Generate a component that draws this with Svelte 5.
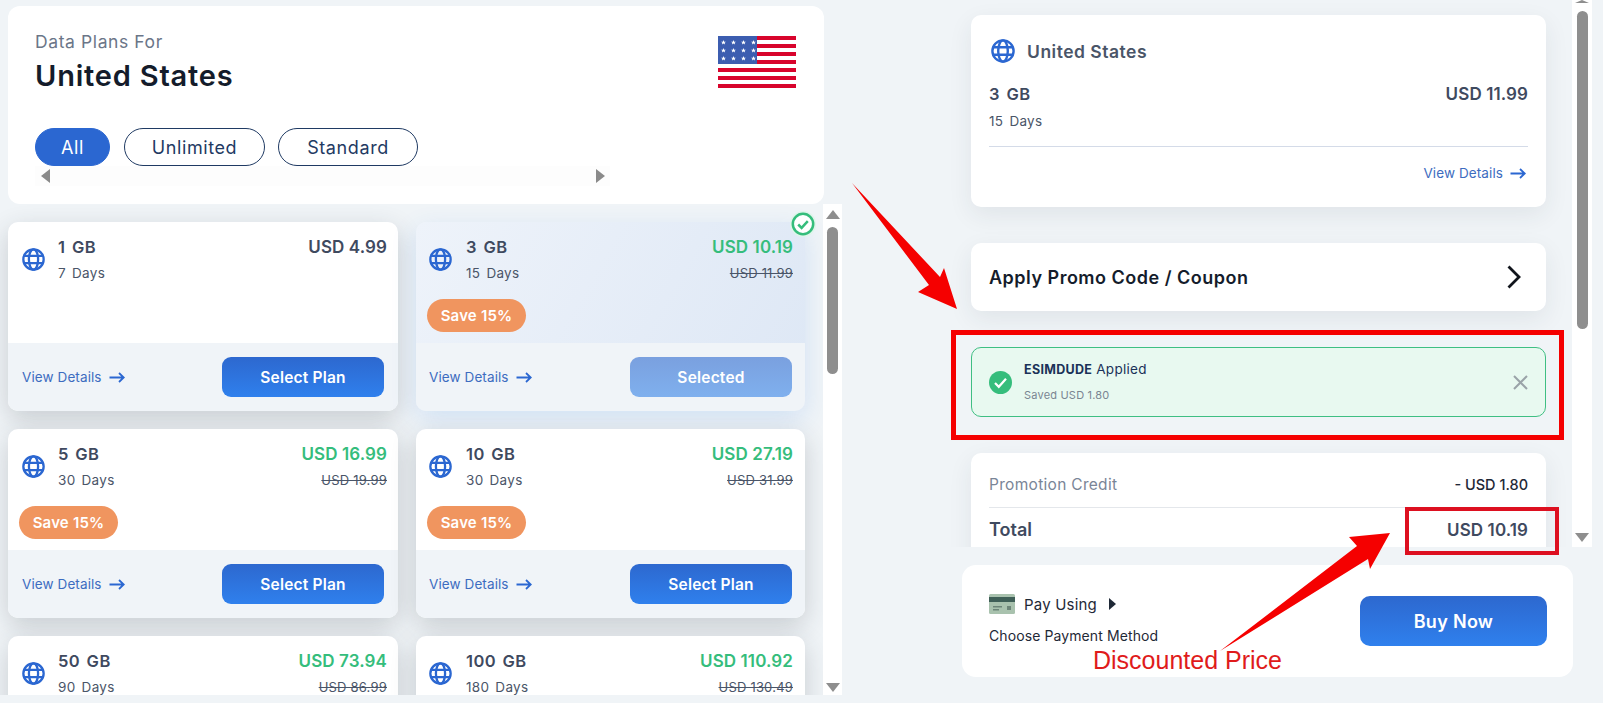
<script>
	const plans = [
		{ gb: '1 GB', days: '7 Days', price: 'USD 4.99' },
		{ gb: '3 GB', days: '15 Days', price: 'USD 10.19', old: 'USD 11.99', save: true, selected: true },
		{ gb: '5 GB', days: '30 Days', price: 'USD 16.99', old: 'USD 19.99', save: true },
		{ gb: '10 GB', days: '30 Days', price: 'USD 27.19', old: 'USD 31.99', save: true },
		{ gb: '50 GB', days: '90 Days', price: 'USD 73.94', old: 'USD 86.99', save: true },
		{ gb: '100 GB', days: '180 Days', price: 'USD 110.92', old: 'USD 130.49', save: true }
	];

	const stars = [];
	for (let r = 0; r < 3; r++) {
		for (let c = 0; c < 4; c++) stars.push({ x: 5 + c * 10, y: 6.5 + r * 8 });
	}
</script>

{#snippet globe(size)}
	<svg class="globe" width={size} height={size} viewBox="0 0 24 24" fill="none" stroke="#2b67d1" stroke-width="2.4">
		<circle cx="12" cy="12" r="10.6" />
		<ellipse cx="12" cy="12" rx="4.8" ry="10.6" />
		<path d="M1.8 8.2h20.4M1.8 15.8h20.4" />
	</svg>
{/snippet}

{#snippet details()}
	<span class="details">
		View Details
		<svg width="16" height="12" viewBox="0 0 16 12" fill="none" stroke="#2b67d1" stroke-width="1.8">
			<path d="M0.5 6.5h14M10 2l4.8 4.5L10 11" />
		</svg>
	</span>
{/snippet}

{#snippet scrollbar()}
	<div class="track">
		<i class="arrow up"></i>
		<div class="thumb"></div>
		<i class="spacer"></i>
		<i class="arrow down"></i>
	</div>
{/snippet}

<div class="page">
	<section class="left">
		<header class="hero">
			<div class="hero-top">
				<div>
					<p class="eyebrow">Data Plans For</p>
					<h1>United States</h1>
				</div>
				<svg class="flag" width="78" height="52" viewBox="0 0 78 52">
					<rect width="78" height="52" fill="#fff" />
					{#each Array(7) as _, i}
						<rect y={i * 8} width="78" height="4" fill="#d8042c" />
					{/each}
					<rect width="39" height="28" fill="#3c5db0" />
					{#each stars as s}
						<polygon
							transform="translate({s.x + 0.5} {s.y})"
							fill="#fff"
							points="0,-2.6 .7,-.8 2.5,-.8 1.1,.3 1.6,2.1 0,1 -1.6,2.1 -1.1,.3 -2.5,-.8 -.7,-.8"
						/>
					{/each}
				</svg>
			</div>
			<div class="pills">
				<button class="pill on">All</button>
				<button class="pill wide">Unlimited</button>
				<button class="pill wide">Standard</button>
			</div>
			<div class="hscroll">
				<i class="tri left-tri"></i>
				<i class="tri right-tri"></i>
			</div>
		</header>

		<div class="list-wrap">
			<div class="list">
				{#each plans as p}
					<article class="plan" class:selected={p.selected}>
						{#if p.selected}
							<svg class="tick" width="26" height="26" viewBox="0 0 26 26" fill="none">
								<circle cx="13" cy="13" r="13" fill="#dff5ea" />
								<circle cx="13" cy="13" r="10.2" fill="#fff" stroke="#35bd7c" stroke-width="2.5" />
								<path d="M8.2 13.5l3.4 3.4 6.2-6.8" stroke="#35bd7c" stroke-width="2.5" />
							</svg>
						{/if}
						<div class="plan-top">
							<div class="summary">
								{@render globe(23)}
								<div class="names">
									<div class="gb">{p.gb}</div>
									<div class="days">{p.days}</div>
								</div>
								<div class="prices">
									<div class="price" class:green={p.old}>{p.price}</div>
									{#if p.old}<s class="old">{p.old}</s>{/if}
								</div>
							</div>
							{#if p.save}<span class="save">Save 15%</span>{/if}
						</div>
						<div class="plan-foot">
							{@render details()}
							<button class="btn" class:muted={p.selected}>{p.selected ? 'Selected' : 'Select Plan'}</button>
						</div>
					</article>
				{/each}
			</div>
			{@render scrollbar()}
		</div>
	</section>

	<section class="right">
		<div class="right-scroll">
			<div class="column">
				<div class="card summary-card">
					<div class="country">
						{@render globe(24)}
						<span>United States</span>
					</div>
					<div class="line">
						<span class="gb">3 GB</span>
						<span class="price">USD 11.99</span>
					</div>
					<div class="days days-line">15 Days</div>
					<hr />
					<div class="end">{@render details()}</div>
				</div>

				<div class="card promo">
					<span>Apply Promo Code / Coupon</span>
					<svg width="16" height="24" viewBox="0 0 16 24" fill="none" stroke="#11151c" stroke-width="2.8">
						<path d="M2.5 1.5L13 12 2.5 22.5" />
					</svg>
				</div>

				<div class="applied">
					<svg width="23" height="23" viewBox="0 0 23 23" fill="none">
						<circle cx="11.5" cy="11.5" r="11.5" fill="#35bd7c" />
						<path d="M6 12l3.8 3.8 7.2-8" stroke="#fff" stroke-width="2.2" />
					</svg>
					<div class="applied-text">
						<div class="code"><b>ESIMDUDE</b> Applied</div>
						<div class="saved">Saved USD 1.80</div>
					</div>
					<svg class="close" width="15" height="15" viewBox="0 0 15 15" stroke="#9aa3a8" stroke-width="2">
						<path d="M1 1l13 13M14 1L1 14" />
					</svg>
				</div>

				<div class="card totals">
					<div class="row credit">
						<span>Promotion Credit</span>
						<span class="amount">- USD 1.80</span>
					</div>
					<div class="row total">
						<span>Total</span>
						<span class="price">USD 10.19</span>
					</div>
				</div>
			</div>
			{@render scrollbar()}
		</div>

		<div class="pay">
			<div>
				<div class="pay-using">
					<svg width="26" height="20" viewBox="0 0 26 20">
						<rect width="26" height="20" rx="1.5" fill="#a9c2ae" />
						<rect y="3" width="26" height="5" fill="#3f5f57" />
						<rect x="4" y="12" width="9" height="1.5" fill="#6d8578" />
						<rect x="4" y="15" width="6" height="1.5" fill="#6d8578" />
						<rect x="18" y="12" width="4" height="4" fill="#6d8578" />
					</svg>
					<span>Pay Using</span>
					<i class="mini-tri"></i>
				</div>
				<div class="choose">Choose Payment Method</div>
			</div>
			<button class="btn buy">Buy Now</button>
		</div>
	</section>

	<!-- annotations drawn on top of the screenshot -->
	<svg class="marks" width="1603" height="703" viewBox="0 0 1603 703">
		<polygon fill="#f50000" points="852,183 940,277 944,268 957,309 918,292 929,285" />
		<polygon fill="#f50000" points="1220,651 1357,546 1349,537 1390,533 1370,569 1368,559" />
	</svg>
	<div class="box box-applied"></div>
	<div class="box box-total"></div>
	<div class="note">Discounted Price</div>
</div>

<style>
	:global(body) {
		margin: 0;
		background: #f0f4f7;
	}

	.page {
		position: relative;
		display: flex;
		width: 1603px;
		height: 703px;
		overflow: hidden;
		background: #f0f4f7;
		font-family: Inter, 'Open Sans', sans-serif;
		color: #3f4a5f;
	}

	button {
		font-family: inherit;
		cursor: pointer;
	}

	.left {
		display: flex;
		flex-direction: column;
		width: 842px;
		height: 695px;
	}

	.hero {
		box-sizing: border-box;
		height: 198px;
		margin: 6px 18px 0 8px;
		padding: 24px 28px 0 27px;
		background: #fff;
		border-radius: 12px;
	}

	.hero-top {
		display: flex;
		justify-content: space-between;
		height: 98px;
	}

	.flag {
		margin-top: 6px;
	}

	.eyebrow {
		margin: 0;
		font-size: 17.5px;
		line-height: 24px;
		letter-spacing: 0.6px;
		color: #6b7688;
	}

	h1 {
		margin: 4px 0 0;
		font-size: 29px;
		line-height: 36px;
		font-weight: 600;
		letter-spacing: 0.8px;
		color: #141c2b;
	}

	.pills {
		display: flex;
		gap: 13px;
	}

	.pill {
		box-sizing: border-box;
		width: 75px;
		height: 38px;
		padding: 0;
		background: #fff;
		border: 1px solid #1f3a63;
		border-radius: 19px;
		font-size: 18px;
		letter-spacing: 0.6px;
		color: #1f3a63;
	}

	.pill.on {
		margin-right: 1px;
		background: #2b67d1;
		border-color: #2b67d1;
		color: #fff;
	}

	.pill.wide {
		width: 141px;
	}

	.pill.wide:last-child {
		width: 140px;
	}

	.hscroll {
		display: flex;
		justify-content: space-between;
		align-items: center;
		width: 575px;
		height: 20px;
		padding: 0 5px 0 6px;
		box-sizing: border-box;
		background: #fdfdfd;
	}

	.tri {
		width: 0;
		height: 0;
		border-top: 7px solid transparent;
		border-bottom: 7px solid transparent;
	}

	.left-tri {
		border-right: 9px solid #8a8a8a;
	}

	.right-tri {
		border-left: 9px solid #8a8a8a;
	}

	.list-wrap {
		flex: 1;
		display: flex;
		min-height: 0;
	}

	.list {
		flex: 1;
		display: grid;
		grid-template-columns: 390px 389px;
		grid-auto-rows: 189px;
		gap: 18px;
		padding: 18px 0 0 8px;
		overflow: hidden;
	}

	.track {
		display: flex;
		flex-direction: column;
		align-items: center;
		box-sizing: border-box;
		width: 19px;
		padding: 6px 0 3px;
		background: #fff;
	}

	.arrow {
		flex: none;
		width: 0;
		height: 0;
		border-left: 7px solid transparent;
		border-right: 7px solid transparent;
	}

	.arrow.up {
		border-bottom: 9px solid #8e8e8e;
	}

	.arrow.down {
		border-top: 9px solid #8e8e8e;
	}

	.thumb {
		flex: none;
		width: 11px;
		height: 147px;
		margin-top: 8px;
		background: #8e8e8e;
		border-radius: 6px;
	}

	.spacer {
		flex: 1;
	}

	.plan {
		position: relative;
		display: flex;
		flex-direction: column;
		background: #fff;
		border-radius: 10px;
		box-shadow: 0 8px 26px rgba(40, 50, 60, 0.2);
	}

	.plan.selected {
		background: linear-gradient(120deg, #eef3fa, #dde7f5);
		box-shadow: 0 8px 26px rgba(47, 128, 237, 0.16);
	}

	.tick {
		position: absolute;
		top: -11px;
		right: -11px;
	}

	.plan-top {
		height: 121px;
		padding-top: 13px;
		box-sizing: border-box;
	}

	.summary {
		display: flex;
		align-items: flex-start;
		padding: 0 11px 0 14px;
	}

	.plan:nth-child(even) .summary {
		padding: 0 12px 0 13px;
	}

	.globe {
		flex: none;
	}

	.summary .globe {
		margin-top: 13px;
	}

	.names {
		flex: 1;
		margin-left: 13px;
	}

	.plan:nth-child(even) .names {
		margin-left: 14px;
	}

	.gb {
		font-size: 16.5px;
		line-height: 24px;
		font-weight: 600;
		letter-spacing: 0.4px;
		word-spacing: 2px;
		color: #3f4a5f;
	}

	.days {
		margin-top: 4px;
		font-size: 13.5px;
		line-height: 20px;
		letter-spacing: 0.3px;
		word-spacing: 2px;
		color: #4a5568;
	}

	.prices {
		text-align: right;
	}

	.price {
		font-size: 17px;
		line-height: 24px;
		font-weight: 600;
		letter-spacing: 0.1px;
		color: #3f4a5f;
	}

	.price.green {
		color: #35bd7c;
	}

	.old {
		display: block;
		margin-top: 4px;
		font-size: 13px;
		line-height: 20px;
		letter-spacing: 0.2px;
		color: #4a5568;
	}

	.save {
		display: block;
		width: 99px;
		height: 33px;
		margin: 16px 0 0 11px;
		background: #f0955f;
		border-radius: 17px;
		font-size: 15px;
		line-height: 33px;
		font-weight: 600;
		letter-spacing: 0.2px;
		text-align: center;
		color: #fff;
	}

	.plan-foot {
		display: flex;
		flex: 1;
		align-items: center;
		justify-content: space-between;
		padding: 0 14px;
		background: #f0f4f8;
		border-radius: 0 0 10px 10px;
	}

	.plan:nth-child(even) .plan-foot {
		padding: 0 13px;
	}

	.details {
		display: inline-flex;
		align-items: center;
		gap: 7px;
		font-size: 13.5px;
		letter-spacing: 0.1px;
		color: #3d6cc0;
	}

	.btn {
		width: 162px;
		height: 40px;
		padding: 0;
		background: linear-gradient(180deg, #2d68cf, #2f80ed);
		border: 0;
		border-radius: 9px;
		font-size: 15.5px;
		font-weight: 600;
		letter-spacing: 0.2px;
		color: #fff;
	}

	.btn.muted {
		background: linear-gradient(180deg, #7aa0df, #7fb0ee);
	}

	.right {
		flex: 1;
		display: flex;
		flex-direction: column;
		min-width: 0;
	}

	.right-scroll {
		display: flex;
		width: 750px;
		height: 547px;
		overflow: hidden;
	}

	.column {
		flex: none;
		box-sizing: border-box;
		width: 730px;
		padding: 15px 26px 0 129px;
		overflow: hidden;
	}

	.right-scroll .track {
		width: 20px;
		padding-top: 0;
		background: #fff;
	}

	.right-scroll .arrow.up {
		height: 0;
		border-bottom-width: 3px;
	}

	.right-scroll .thumb {
		height: 318px;
		margin-top: 8px;
	}

	.right-scroll .arrow.down {
		margin-bottom: 2px;
	}

	.card {
		background: #fff;
		border-radius: 10px;
		box-shadow: 0 8px 24px rgba(40, 50, 60, 0.08);
	}

	.summary-card {
		box-sizing: border-box;
		height: 192px;
		padding: 24px 18px 0;
	}

	.country {
		display: flex;
		align-items: center;
		gap: 12px;
		margin-left: 2px;
		font-size: 17.5px;
		line-height: 23px;
		font-weight: 600;
		letter-spacing: 0.5px;
		color: #4a5568;
	}

	.line {
		display: flex;
		justify-content: space-between;
		margin-top: 19px;
	}

	.days-line {
		margin-top: 5px;
	}

	hr {
		height: 1px;
		margin: 15px 0 0;
		background: #d4dbe8;
		border: 0;
	}

	.end {
		display: flex;
		justify-content: flex-end;
		align-items: center;
		height: 20px;
		margin-top: 16px;
		padding-right: 2px;
	}

	.promo {
		display: flex;
		align-items: center;
		justify-content: space-between;
		box-sizing: border-box;
		height: 68px;
		margin-top: 36px;
		padding: 0 24px 0 18px;
		font-size: 18px;
		font-weight: 600;
		letter-spacing: 0.5px;
		color: #141c2b;
	}

	.applied {
		display: flex;
		align-items: center;
		box-sizing: border-box;
		height: 70px;
		margin-top: 36px;
		padding: 0 17px;
		background: #e8f9f0;
		border: 1px solid #3fbf83;
		border-radius: 10px;
	}

	.applied-text {
		flex: 1;
		margin: -3px 0 0 12px;
	}

	.code {
		font-size: 13.5px;
		line-height: 20px;
		letter-spacing: 0.3px;
		color: #1a3258;
	}

	.code b {
		font-size: 12.5px;
		font-weight: 700;
	}

	.saved {
		margin-top: 7px;
		font-size: 11px;
		line-height: 16px;
		letter-spacing: 0.2px;
		color: #7a8592;
	}

	.totals {
		height: 120px;
		margin-top: 36px;
		padding: 0 18px;
	}

	.row {
		display: flex;
		justify-content: space-between;
		align-items: center;
	}

	.credit {
		height: 22px;
		padding: 20px 0 12px;
		border-bottom: 1px solid #e4e7eb;
		font-size: 15.5px;
		letter-spacing: 0.3px;
		color: #7a8597;
	}

	.amount {
		font-size: 14.5px;
		font-weight: 500;
		letter-spacing: 0;
		color: #1f2937;
	}

	.total {
		padding-top: 10px;
		font-size: 18px;
		line-height: 24px;
		font-weight: 600;
	}

	.pay {
		display: flex;
		align-items: center;
		justify-content: space-between;
		box-sizing: border-box;
		width: 611px;
		height: 112px;
		margin: 18px 0 0 120px;
		padding: 0 26px 0 27px;
		background: #fff;
		border-radius: 14px;
	}

	.pay-using {
		display: flex;
		align-items: center;
		gap: 9px;
		margin-top: -4px;
		font-size: 15px;
		letter-spacing: 0.2px;
		color: #1f2937;
	}

	.mini-tri {
		margin-left: 3px;
		border-left: 7px solid #1f2937;
		border-top: 6px solid transparent;
		border-bottom: 6px solid transparent;
	}

	.choose {
		margin-top: 13px;
		font-size: 14px;
		letter-spacing: 0.1px;
		color: #1f2937;
	}

	.btn.buy {
		width: 187px;
		height: 50px;
		font-size: 18px;
		letter-spacing: 0.3px;
		border-radius: 10px;
	}

	.marks {
		position: absolute;
		top: 0;
		left: 0;
		pointer-events: none;
	}

	.box {
		position: absolute;
		box-sizing: border-box;
	}

	.box-applied {
		left: 951px;
		top: 330px;
		width: 613px;
		height: 110px;
		border: 5px solid #f50000;
	}

	.box-total {
		left: 1405px;
		top: 507px;
		width: 154px;
		height: 48px;
		border: 4px solid #dd1020;
	}

	.note {
		position: absolute;
		left: 1093px;
		top: 646px;
		font-family: 'Liberation Sans', Arial, sans-serif;
		font-size: 25px;
		line-height: 28px;
		color: #e01b1b;
	}
</style>
